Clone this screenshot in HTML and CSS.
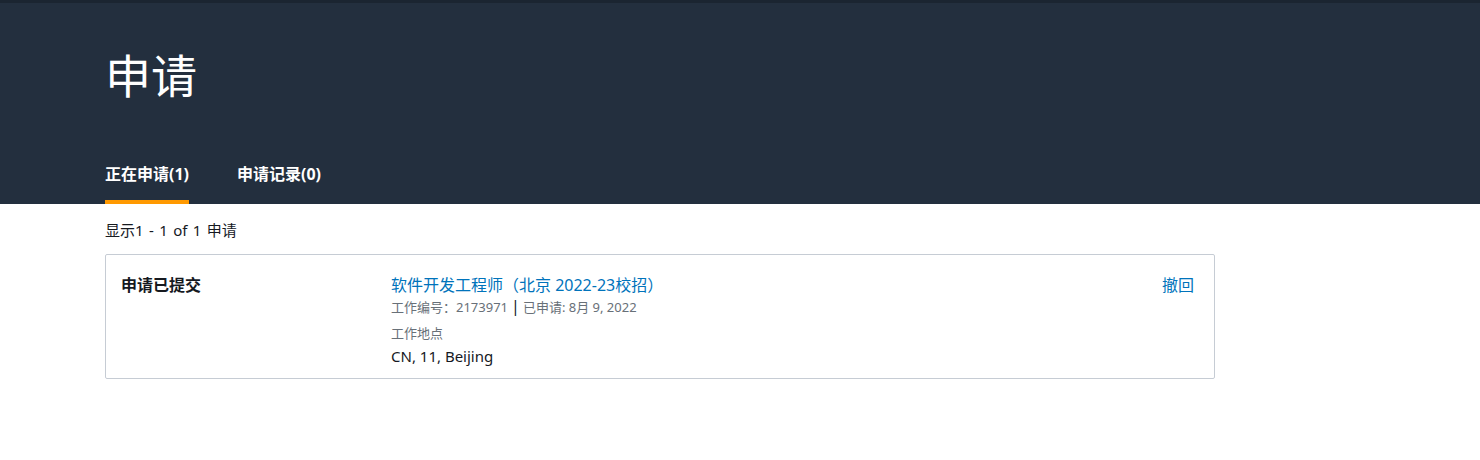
FILE: index.html
```html
<!DOCTYPE html>
<html lang="zh-CN">
<head>
<meta charset="utf-8">
<title>申请</title>
<link rel="stylesheet" href="styles.css">
</head>
<body>
<header class="hero">
  <div class="topline"></div>
  <div class="wrap">
    <h1 class="title">申请</h1>
    <nav class="tabs">
      <a class="tab active">正在申请(1)</a>
      <a class="tab">申请记录(0)</a>
    </nav>
  </div>
</header>
<main class="wrap">
  <p class="count">显示1 - 1 of 1 申请</p>
  <section class="card">
    <div class="status">申请已提交</div>
    <div class="details">
      <a class="job">软件开发工程师（北京 2022-23校招）</a>
      <div class="meta">工作编号：2173971<span class="sep">|</span>已申请: 8月 9, 2022</div>
      <div class="label">工作地点</div>
      <div class="loc">CN, 11, Beijing</div>
    </div>
    <a class="withdraw">撤回</a>
  </section>
</main>
</body>
</html>
```

FILE: styles.css
```css
* { box-sizing: border-box; }
html, body { margin: 0; padding: 0; background: #fff; }
body {
  font-family: "Noto Sans", "Noto Sans CJK SC", sans-serif;
  color: #16191f;
}
.hero { background: #232f3e; height: 204px; display: flex; flex-direction: column; }
.topline { height: 3px; background: #1b2531; }
.hero .wrap { flex: 1; display: flex; flex-direction: column; }
.wrap { padding-left: 105px; width: 1215px; }
.title {
  margin: 0;
  padding-top: 40px;
  font-size: 46px;
  font-weight: 400;
  line-height: 60px;
  color: #fff;
  font-family: "Noto Sans CJK SC", sans-serif;
}
.tabs { display: flex; gap: 48px; margin-top: auto; }
.tab {
  color: #fff;
  font-size: 16px;
  font-weight: 700;
  line-height: 22px;
  padding-bottom: 15px;
  border-bottom: 4px solid transparent;
}
.tab.active { border-bottom-color: #ff9900; }
.count { margin: 0; padding-top: 16px; font-size: 15px; line-height: 20px; word-spacing: 1.5px; }
.card {
  margin-top: 14px;
  border: 1px solid #c6ccd4;
  border-radius: 2px;
  display: flex;
  padding: 19px 20px 11px 15px;
  min-height: 125px;
}
.status { width: 270px; font-size: 16px; font-weight: 700; line-height: 22px; }
.details { flex: 1; }
.job { display: block; color: #0073bb; font-size: 16px; line-height: 22px; }
.meta { color: #687078; font-size: 13px; line-height: 20px; }
.sep { color: #16191f; font-size: 16px; margin: 0 3px; }
.label { color: #687078; font-size: 13px; line-height: 18px; margin-top: 7px; }
.loc { font-size: 15px; line-height: 20px; margin-top: 4px; }
.withdraw { color: #0073bb; font-size: 16px; line-height: 22px; }
```
